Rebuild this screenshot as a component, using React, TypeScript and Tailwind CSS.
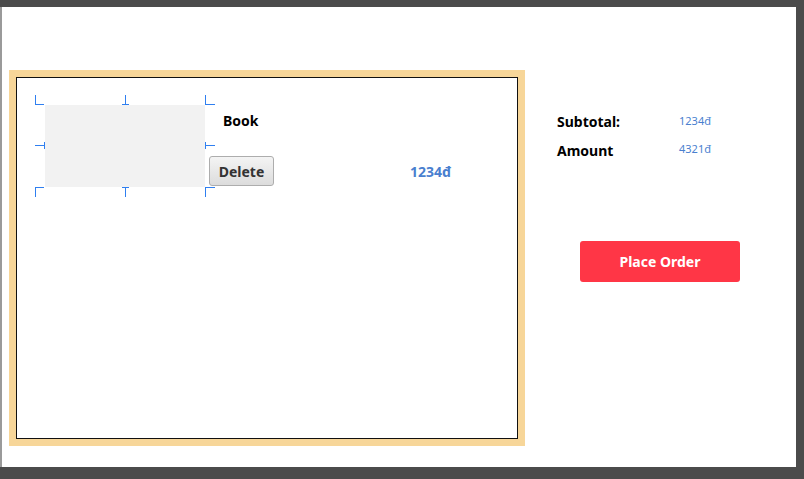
import React from "react";

function Handles() {
  const c = "#2f7ff0";
  return (
    <svg
      className="absolute left-[-10px] top-[-10px] pointer-events-none"
      width="181"
      height="103"
      viewBox="0 0 181 103"
      shapeRendering="crispEdges"
    >
      <g stroke={c} strokeWidth="1" fill="none">
        <path d="M0.5 0V10M0 9.5H9" />
        <path d="M90.5 0V10M87 9.5H94" />
        <path d="M170.5 0V10M170 9.5H180" />
        <path d="M0 50.5H10M9.5 47V54" />
        <path d="M170 50.5H180M170.5 47V54" />
        <path d="M0.5 92V102M0 92.5H9" />
        <path d="M90.5 92V102M87 92.5H94" />
        <path d="M170.5 92V102M170 92.5H180" />
      </g>
    </svg>
  );
}

export default function App() {
  return (
    <div
      className="w-[804px] h-[479px] bg-[#4b4b4b] pt-[7px] pr-[8px] pb-[12px] overflow-hidden"
      style={{ fontFamily: '"Noto Sans", "Open Sans", Arial, sans-serif' }}
    >
      <div className="h-full bg-white border-l-2 border-[#9a9a9a] flex pt-[63px] pl-[7px]">
        {/* cart box */}
        <div className="w-[516px] h-[376px] bg-[#f7d699] p-[7px]">
          <div className="w-full h-full bg-white border border-[#111] flex pt-[27px] pl-[28px]">
            <div className="relative w-[160px] h-[82px] bg-[#f2f2f2] shrink-0">
              <Handles />
            </div>
            <div className="flex flex-col">
              <div className="ml-[18px] mt-[6px] text-[14px] leading-[20px] font-bold text-black">
                Book
              </div>
              <div className="flex items-center mt-[25px] ml-[4px]">
                <button className="w-[65px] h-[30px] rounded-[3px] border border-[#adadad] bg-gradient-to-b from-[#f4f4f4] to-[#dcdcdc] text-[14px] font-bold text-[#333]">
                  Delete
                </button>
                <div className="ml-[136px] text-[14px] font-bold text-[#4a7fcf]">1234đ</div>
              </div>
            </div>
          </div>
        </div>
        {/* summary */}
        <div className="ml-[32px] flex flex-col pt-[41px]">
          <div className="flex items-center h-[20px]">
            <div className="w-[122px] text-[14px] font-bold text-black">Subtotal:</div>
            <div className="text-[11px] text-[#4a7fcf]">1234đ</div>
          </div>
          <div className="flex items-center h-[20px] mt-[9px]">
            <div className="w-[122px] text-[14px] font-bold text-black">Amount</div>
            <div className="text-[11px] text-[#4a7fcf] -mt-[2px]">4321đ</div>
          </div>
          <button className="ml-[23px] mt-[81px] w-[160px] h-[41px] rounded-[3px] bg-[#ff3646] text-white text-[14px] font-bold">
            Place Order
          </button>
        </div>
      </div>
    </div>
  );
}
